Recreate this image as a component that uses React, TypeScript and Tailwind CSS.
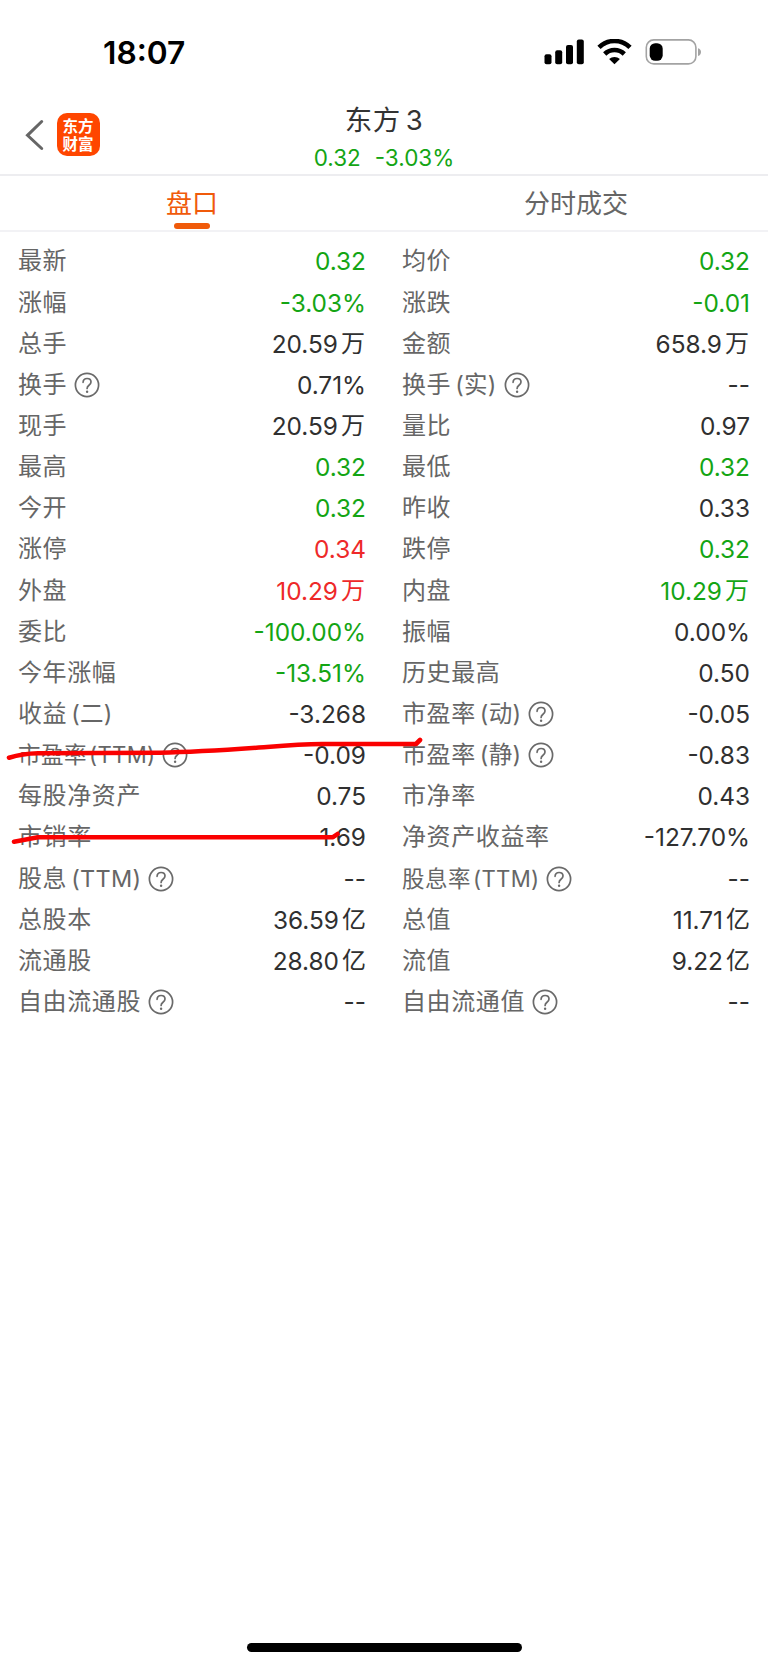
type Tone = 'up' | 'down' | 'flat'

interface Metric {
  label: string
  note?: string
  help?: boolean
  narrow?: boolean
  value: string
  unit?: string
  tone?: Tone
}

const toneClass: Record<Tone, string> = {
  up: 'text-[#ee2929]',
  down: 'text-[#14a514]',
  flat: 'text-[#303030]',
}

const left: Metric[] = [
  { label: '最新', value: '0.32', tone: 'down' },
  { label: '涨幅', value: '-3.03%', tone: 'down' },
  { label: '总手', value: '20.59', unit: '万' },
  { label: '换手', help: true, value: '0.71%' },
  { label: '现手', value: '20.59', unit: '万' },
  { label: '最高', value: '0.32', tone: 'down' },
  { label: '今开', value: '0.32', tone: 'down' },
  { label: '涨停', value: '0.34', tone: 'up' },
  { label: '外盘', value: '10.29', unit: '万', tone: 'up' },
  { label: '委比', value: '-100.00%', tone: 'down' },
  { label: '今年涨幅', value: '-13.51%', tone: 'down' },
  { label: '收益', note: '(二)', value: '-3.268' },
  { label: '市盈率', note: '(TTM)', help: true, narrow: true, value: '-0.09' },
  { label: '每股净资产', value: '0.75' },
  { label: '市销率', value: '1.69' },
  { label: '股息', note: '(TTM)', help: true, value: '--' },
  { label: '总股本', value: '36.59', unit: '亿' },
  { label: '流通股', value: '28.80', unit: '亿' },
  { label: '自由流通股', help: true, value: '--' },
]

const right: Metric[] = [
  { label: '均价', value: '0.32', tone: 'down' },
  { label: '涨跌', value: '-0.01', tone: 'down' },
  { label: '金额', value: '658.9', unit: '万' },
  { label: '换手', note: '(实)', help: true, value: '--' },
  { label: '量比', value: '0.97' },
  { label: '最低', value: '0.32', tone: 'down' },
  { label: '昨收', value: '0.33' },
  { label: '跌停', value: '0.32', tone: 'down' },
  { label: '内盘', value: '10.29', unit: '万', tone: 'down' },
  { label: '振幅', value: '0.00%' },
  { label: '历史最高', value: '0.50' },
  { label: '市盈率', note: '(动)', help: true, value: '-0.05' },
  { label: '市盈率', note: '(静)', help: true, value: '-0.83' },
  { label: '市净率', value: '0.43' },
  { label: '净资产收益率', value: '-127.70%' },
  { label: '股息率', note: '(TTM)', help: true, narrow: true, value: '--' },
  { label: '总值', value: '11.71', unit: '亿' },
  { label: '流值', value: '9.22', unit: '亿' },
  { label: '自由流通值', help: true, value: '--' },
]

function HelpIcon() {
  return (
    <svg className="ml-[7px] h-[26px] w-[26px] shrink-0" viewBox="0 0 26 26" fill="none" stroke="#6a6a6a" strokeWidth="1.7" strokeLinecap="round">
      <circle cx="13" cy="13" r="11.6" />
      <path d="M9.1 10.3C9.2 7.9 10.8 6.5 13.1 6.5s3.9 1.4 3.9 3.5c0 1.5-.8 2.3-2 3.2-1.3 1-1.9 1.6-1.9 3.3" />
      <circle cx="13.1" cy="19.8" r="1.2" fill="#6a6a6a" stroke="none" />
    </svg>
  )
}

function Row({ m }: { m: Metric }) {
  return (
    <div className="flex h-[41.15px] items-center justify-between whitespace-nowrap text-[24px] leading-[36px]">
      <div className="flex items-center text-[#666]">
        <span className={m.narrow ? 'text-[22.5px] tracking-[0.5px]' : 'tracking-[0.6px]'}>{m.label}</span>
        {m.note && <span className={m.narrow ? 'ml-[2px] text-[22.2px] tracking-[0.3px]' : 'ml-1 text-[23.5px] tracking-[0.3px]'}>{m.note}</span>}
        {m.help && <HelpIcon />}
      </div>
      <div className={`flex items-center text-[24.4px] ${toneClass[m.tone ?? 'flat']}`}>
        <span>{m.value}</span>
        {m.unit && <span className={m.unit === '亿' ? 'ml-[3px] text-[24px]' : 'ml-[3px] mr-px text-[24px]'}>{m.unit}</span>}
      </div>
    </div>
  )
}

function StatusBar() {
  return (
    <div className="flex h-[104px] items-center justify-between pl-[103px] pr-[66px]">
      <span className="pt-[2px] text-[31.7px] font-semibold leading-[40px] text-black">18:07</span>
      <div className="flex items-center">
        <svg className="h-[26px] w-[40px]" viewBox="0 0 40 26">
          <rect x="0.5" y="15.3" width="7" height="10" rx="2" />
          <rect x="11.2" y="11.3" width="7" height="14" rx="2" />
          <rect x="22" y="6" width="7" height="19.3" rx="2" />
          <rect x="32.8" y="0.5" width="7" height="24.8" rx="2" />
        </svg>
        <svg className="ml-[13px] h-[26px] w-[35px]" viewBox="0 0 35 26" fill="none" stroke="#000" strokeWidth="4.6">
          <path d="M2 8.4a22 22 0 0 1 31 0" />
          <path d="M7.7 15a14 14 0 0 1 19.6 0" />
          <path d="M17.5 25.2l-5.4-5.2a8 8 0 0 1 10.8 0z" fill="#000" stroke="none" />
        </svg>
        <svg className="ml-[13px] h-[26px] w-[57px]" viewBox="0 0 57 26">
          <rect x="1.3" y="0.9" width="49.6" height="24" rx="7.5" fill="none" stroke="#a3a3a3" strokeWidth="1.6" />
          <rect x="4.7" y="4.2" width="13" height="17.6" rx="5.5" />
          <path d="M53 9.2c2 .6 3 2 3 3.9S55 16.5 53 17.1z" fill="#a3a3a3" />
        </svg>
      </div>
    </div>
  )
}

export default function App() {
  return (
    <div className="relative flex h-[1666px] w-[768px] flex-col overflow-hidden bg-white font-['Inter','Noto_Sans_CJK_SC',sans-serif]">
      <StatusBar />

      <header className="grid h-[72px] grid-cols-[1fr_auto_1fr] border-b-2 border-[#ededf0]">
        <div className="flex items-start pl-[25px] pt-[9px]">
          <svg className="mt-[6px] h-[32px] w-[20px]" viewBox="0 0 20 32" fill="none" stroke="#666" strokeWidth="3" strokeLinecap="round">
            <path d="M16.7 2.5L2.5 16.3 16.7 29.5" />
          </svg>
          <div className="ml-[11.5px] h-[43px] w-[43px] rounded-[10px] bg-[#ff4600] px-[5.5px] pt-[4px] text-center font-['Noto_Sans_CJK_SC',sans-serif] text-[15.5px] font-bold leading-[17.5px] text-white [word-break:break-all]">
            东方财富
          </div>
        </div>
        <div className="flex flex-col items-center">
          <h1 className="flex text-[27.5px] leading-[32px] tracking-[0.5px] text-[#333]">
            <span>东方</span>
            <span className="ml-[5px]">3</span>
          </h1>
          <p className="flex gap-[14px] pt-[3px] text-[22.5px] leading-[38px] text-[#14a514]">
            <span>0.32</span>
            <span>-3.03%</span>
          </p>
        </div>
        <div />
      </header>

      <nav className="grid h-[56px] grid-cols-2 border-b-2 border-[#f2f2f5] text-[26px] leading-[56px]">
        <div className="relative text-center text-[#f05a0a]">
          盘口
          <span className="absolute left-1/2 top-[46.5px] h-[6px] w-[36px] -translate-x-1/2 rounded-full bg-[#f05a0a]" />
        </div>
        <div className="text-center text-[#666]">分时成交</div>
      </nav>

      <main className="grid grid-cols-2 pt-[8.9px]">
        <section className="px-[18px]">
          {left.map((m) => <Row key={m.label + (m.note ?? '')} m={m} />)}
        </section>
        <section className="px-[18px]">
          {right.map((m) => <Row key={m.label + (m.note ?? '')} m={m} />)}
        </section>
      </main>

      <svg className="pointer-events-none absolute left-0 top-[730px] h-[120px] w-[430px]" viewBox="0 730 430 120" fill="none" stroke="#fa0000" strokeWidth="4.6" strokeLinecap="round" strokeLinejoin="round">
        <path d="M9 757.7C18 755 27 753.5 38 753.3L160 752.7C200 752 233 749.5 267 747 290 745 305 744 322 744H416L420 740" />
        <path d="M14 841.7L38 837.2H333L337.5 834" />
      </svg>

      <div className="mt-auto flex justify-center pb-[14px]">
        <div className="h-[9px] w-[275px] rounded-full bg-black" />
      </div>
    </div>
  )
}
